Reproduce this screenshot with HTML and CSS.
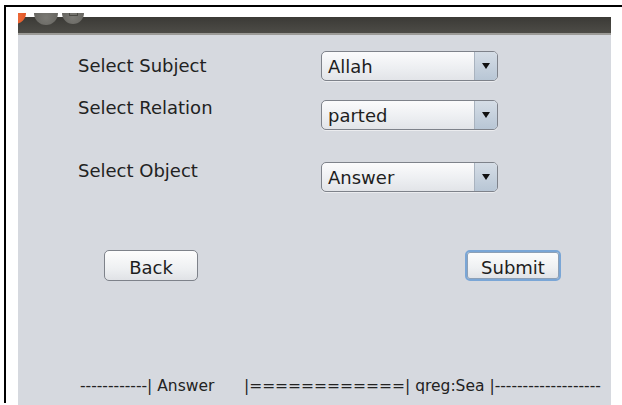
FILE: index.html
```html
<!DOCTYPE html>
<html>
<head>
<meta charset="utf-8">
<title>Query Builder</title>
<link rel="stylesheet" href="styles.css">
</head>
<body>
<div class="frame">
  <div class="window">
    <div class="titlebar">
      <span class="btn-dot close"></span>
      <span class="btn-dot min"></span>
      <span class="btn-dot max"><span class="max-glyph"></span></span>
    </div>
    <div class="content">
      <div class="form">
        <div class="labels">
          <div class="label l1">Select Subject</div>
          <div class="label l2">Select Relation</div>
          <div class="label l3">Select Object</div>
        </div>
        <div class="combos">
          <div class="combo c1"><span class="combo-text">Allah</span><span class="combo-arrow"><span class="tri"></span></span></div>
          <div class="combo c2"><span class="combo-text">parted</span><span class="combo-arrow"><span class="tri"></span></span></div>
          <div class="combo c3"><span class="combo-text">Answer</span><span class="combo-arrow"><span class="tri"></span></span></div>
        </div>
      </div>
      <div class="actions">
        <button class="push back">Back</button>
        <button class="push submit">Submit</button>
      </div>
      <div class="status">------------| Answer      |============| qreg:Sea |-------------------</div>
    </div>
  </div>
</div>
</body>
</html>
```

FILE: styles.css
```css
html, body {
  margin: 0;
  padding: 0;
  background: #ffffff;
  height: 100%;
  overflow: hidden;
}

.frame {
  margin: 5px 0 0 4px;
  border-top: 2px solid #000;
  border-left: 2px solid #000;
  height: 398px;
  box-sizing: border-box;
  padding: 6px 0 0 12px;
}

.window {
  width: 593px;
  height: 392px;
  display: flex;
  flex-direction: column;
  position: relative;
  overflow: hidden;
  font-family: "DejaVu Sans", sans-serif;
  color: #222;
}

.titlebar {
  height: 16px;
  margin-top: 4px;
  flex: none;
  background: linear-gradient(#3b3a36, #4d4c47);
  border-bottom: 2px solid #9c9b97;
}

.btn-dot {
  position: absolute;
  top: -11px;
  width: 22px;
  height: 22px;
  border-radius: 50%;
  background: radial-gradient(circle at 50% 70%, #7a7974, #5b5a55);
}

.btn-dot.close {
  left: -14px;
  background: radial-gradient(circle at 50% 70%, #f0703e, #d9481a);
}

.btn-dot.min {
  left: 16px;
  width: 24px;
  height: 24px;
  top: -12px;
}

.btn-dot.max {
  left: 44px;
}

.max-glyph {
  position: absolute;
  left: 7px;
  top: 9px;
  width: 7px;
  height: 4px;
  border: 1px solid #4a4944;
  border-top: none;
}

.content {
  flex: 1;
  background: #d6d9df;
  display: flex;
  flex-direction: column;
}

.form {
  display: flex;
  height: 157px;
}

.labels {
  width: 303px;
  padding: 20px 0 0 60px;
  box-sizing: border-box;
  font-size: 18px;
  line-height: 21px;
}

.label.l2 { margin-top: 21px; }
.label.l3 { margin-top: 42px; }

.combos {
  padding-top: 16px;
}

.combo {
  width: 177px;
  height: 30px;
  box-sizing: border-box;
  border: 1px solid #7e828a;
  border-radius: 5px;
  background: linear-gradient(#fbfbfc, #eceef1 60%, #e2e4e8);
  display: flex;
  overflow: hidden;
  box-shadow: 0 1px 0 rgba(255,255,255,0.5);
}

.combo.c2 { margin-top: 19px; }
.combo.c3 { margin-top: 32px; }

.combo-text {
  flex: 1;
  padding-left: 6px;
  font-size: 18px;
  line-height: 29px;
  color: #1e1e1e;
}

.combo-arrow {
  width: 22px;
  border-left: 1px solid #a9b3bf;
  background: linear-gradient(#d5dde6, #b8c6d5);
  display: flex;
  align-items: center;
  justify-content: center;
}

.tri {
  width: 0;
  height: 0;
  border-left: 4px solid transparent;
  border-right: 4px solid transparent;
  border-top: 6px solid #111;
}

.actions {
  display: flex;
  justify-content: space-between;
  padding: 0 50px 0 86px;
  margin-top: 58px;
}

.push {
  height: 31px;
  box-sizing: border-box;
  border: 1px solid #7e828a;
  border-radius: 5px;
  background: linear-gradient(#fdfdfd, #eef0f2 60%, #e0e2e6);
  font-family: "DejaVu Sans", sans-serif;
  font-size: 18px;
  color: #1e1e1e;
  padding: 3px 0 0 0;
}

.push.back { width: 94px; }

.push.submit {
  width: 96px;
  border: 2px solid #7aa6d6;
  box-shadow: inset 0 0 0 1px #8da0b6;
}

.status {
  margin-top: auto;
  margin-bottom: 9px;
  padding-left: 62px;
  font-size: 15.5px;
  line-height: 19px;
  white-space: pre;
  color: #222;
}
```
